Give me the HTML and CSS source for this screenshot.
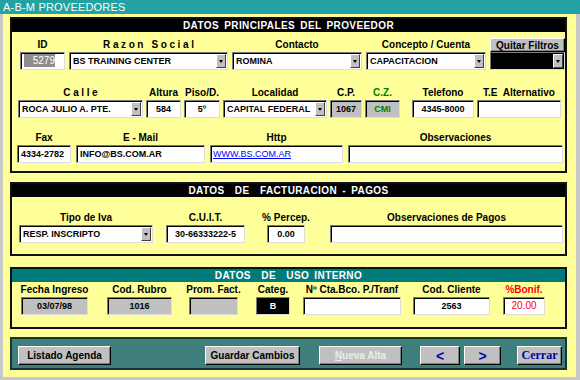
FILE: index.html
```html
<!DOCTYPE html>
<html lang="es">
<head>
  <meta charset="UTF-8" />
  <title>A-B-M Proveedores</title>
  <link rel="stylesheet" href="styles.css">
</head>
<body>
  <div class="window">
    <div class="titlebar">A-B-M PROVEEDORES</div>

    <div class="client">

      <!-- Datos principales -->
      <div class="group g-main">
        <div class="group-head">DATOS PRINCIPALES DEL PROVEEDOR</div>

        <div class="row r1">
          <div class="field w-id">
            <label>ID</label>
            <div class="box"><span class="sel">5279</span></div>
          </div>
          <div class="field w-razon">
            <label class="spaced">Razon Social</label>
            <div class="box select"><span class="val">BS TRAINING CENTER</span><span class="drop"></span></div>
          </div>
          <div class="field w-contacto">
            <label>Contacto</label>
            <div class="box select"><span class="val">ROMINA</span><span class="drop"></span></div>
          </div>
          <div class="field w-concepto">
            <label>Concepto / Cuenta</label>
            <div class="box select"><span class="val">CAPACITACION</span><span class="drop"></span></div>
          </div>
          <div class="field w-filtros">
            <button class="btn btn-filter">Quitar Filtros</button>
            <div class="box select dark"><span class="val"></span><span class="drop"></span></div>
          </div>
        </div>

        <div class="row r2">
          <div class="field w-calle">
            <label class="spaced">Calle</label>
            <div class="box select"><span class="val">ROCA JULIO A. PTE.</span><span class="drop"></span></div>
          </div>
          <div class="field w-altura">
            <label>Altura</label>
            <div class="box center">584</div>
          </div>
          <div class="field w-piso">
            <label>Piso/D.</label>
            <div class="box center">5º</div>
          </div>
          <div class="field w-localidad">
            <label>Localidad</label>
            <div class="box select"><span class="val">CAPITAL FEDERAL</span><span class="drop"></span></div>
          </div>
          <div class="field w-cp">
            <label>C.P.</label>
            <div class="box grey center">1067</div>
          </div>
          <div class="field w-cz">
            <label class="green">C.Z.</label>
            <div class="box grey center green">CMI</div>
          </div>
          <div class="field w-tel">
            <label>Telefono</label>
            <div class="box center">4345-8000</div>
          </div>
          <div class="field w-tealt">
            <label>T.E&nbsp; Alternativo</label>
            <div class="box"></div>
          </div>
        </div>

        <div class="row r3">
          <div class="field w-fax">
            <label>Fax</label>
            <div class="box">4334-2782</div>
          </div>
          <div class="field w-email">
            <label>E - Mail</label>
            <div class="box">INFO@BS.COM.AR</div>
          </div>
          <div class="field w-http">
            <label>Http</label>
            <div class="box link">WWW.BS.COM.AR</div>
          </div>
          <div class="field w-obs">
            <label>Observaciones</label>
            <div class="box"></div>
          </div>
        </div>
      </div>

      <!-- Facturacion -->
      <div class="group g-billing">
        <div class="group-head">DATOS&nbsp; DE&nbsp; FACTURACION - PAGOS</div>
        <div class="row r4">
          <div class="field w-iva">
            <label>Tipo de Iva</label>
            <div class="box select"><span class="val">RESP. INSCRIPTO</span><span class="drop"></span></div>
          </div>
          <div class="field w-cuit">
            <label>C.U.I.T.</label>
            <div class="box center">30-66333222-5</div>
          </div>
          <div class="field w-percep">
            <label>% Percep.</label>
            <div class="box center">0.00</div>
          </div>
          <div class="field w-obspagos">
            <label>Observaciones de Pagos</label>
            <div class="box"></div>
          </div>
        </div>
      </div>

      <!-- Uso interno -->
      <div class="group g-internal">
        <div class="group-head teal">DATOS&nbsp; DE&nbsp; USO INTERNO</div>
        <div class="row r5">
          <div class="field w-fecha">
            <label>Fecha Ingreso</label>
            <div class="box grey center">03/07/98</div>
          </div>
          <div class="field w-rubro">
            <label>Cod. Rubro</label>
            <div class="box grey center">1016</div>
          </div>
          <div class="field w-prom">
            <label>Prom. Fact.</label>
            <div class="box grey"></div>
          </div>
          <div class="field w-categ">
            <label>Categ.</label>
            <div class="box dark center">B</div>
          </div>
          <div class="field w-cta">
            <label>Nº Cta.Bco. P./Tranf</label>
            <div class="box"></div>
          </div>
          <div class="field w-codcli">
            <label>Cod. Cliente</label>
            <div class="box center">2563</div>
          </div>
          <div class="field w-bonif">
            <label class="red">%Bonif.</label>
            <div class="box center red thin">20.00</div>
          </div>
        </div>
      </div>

      <!-- Botonera -->
      <div class="toolbar">
        <button class="btn tb-list">Listado Agenda</button>
        <button class="btn tb-save">Guardar Cambios</button>
        <button class="btn tb-new" disabled><u>N</u>ueva Alta</button>
        <button class="btn tb-nav tb-prev">&lt;</button>
        <button class="btn tb-nav tb-next">&gt;</button>
        <button class="btn tb-close">Cerrar</button>
      </div>

    </div>
  </div>
</body>
</html>
```

FILE: styles.css
```css
* {
  box-sizing: border-box;
}

html,
body {
  margin: 0;
}

body {
  font-family: "Liberation Sans", Arial, sans-serif;
  background: #c0c0c0;
}

.window {
  width: 580px;
  height: 380px;
  display: flex;
  flex-direction: column;
  background: #c8c8c8;
}

.titlebar {
  height: 14px;
  background: #22a2a3;
  color: #fff;
  font-size: 11px;
  line-height: 14px;
  padding-left: 3px;
  letter-spacing: 0.2px;
}

.client {
  flex: 1;
  margin: 0 4px 3px 3px;
  background: #ffff99;
  padding: 3px 9px 0 7px;
  display: flex;
  flex-direction: column;
}

/* group frames */
.group {
  border: 2px solid #111;
}

.g-main {
  padding-bottom: 8px;
  margin-bottom: 9px;
}

.g-billing {
  padding-bottom: 11px;
  margin-bottom: 11px;
}

.g-internal {
  padding-bottom: 12px;
  margin-bottom: 8px;
}

.group-head {
  height: 13px;
  background: #000;
  color: #fff;
  font-size: 10px;
  font-weight: bold;
  line-height: 13px;
  text-align: center;
  letter-spacing: 0.4px;
  word-spacing: 2px;
}

.group-head.teal {
  background: #007b7b;
}

/* rows */
.row {
  display: flex;
  align-items: flex-start;
}

.r1 {
  margin-top: 6px;
  padding-left: 8px;
  gap: 4px;
}

.r2 {
  margin-top: 16px;
  padding-left: 6px;
  gap: 3px;
}

.r3 {
  margin-top: 13px;
  padding-left: 5px;
  gap: 5px;
}

.r4 {
  margin-top: 14px;
  padding-left: 7px;
  gap: 13px;
}

.r5 {
  margin-top: 1px;
  padding-left: 9px;
  gap: 13px;
}

.field {
  display: flex;
  flex-direction: column;
  align-items: center;
}

.field label {
  height: 14px;
  line-height: 14px;
  font-size: 10px;
  font-weight: bold;
  white-space: nowrap;
}

.field label.spaced {
  letter-spacing: 2.6px;
  padding-left: 2.6px;
}

.green {
  color: #008000;
}

.red {
  color: #f00;
}

/* field widths */
.w-id { width: 45px; }
.w-razon { width: 159px; }
.w-contacto { width: 130px; }
.w-concepto { width: 120px; }
.w-filtros { width: 75px; }

.w-calle { width: 125px; }
.w-altura { width: 35px; }
.w-piso { width: 36px; }
.w-localidad { width: 104px; }
.w-cp { width: 32px; }
.w-cz { width: 35px; }
.w-tel { width: 62px; margin-left: 9px; }
.w-tealt { width: 84px; }

.w-fax { width: 54px; }
.w-email { width: 129px; }
.w-http { width: 133px; }
.w-obs { width: 215px; }

.w-iva { width: 134px; }
.w-cuit { width: 79px; }
.w-percep { width: 38px; margin-left: 9px; }
.w-obspagos { width: 233px; margin-left: 12px; }

.w-fecha { width: 67px; }
.w-rubro { width: 65px; margin-left: 6px; }
.w-prom { width: 49px; margin-left: 4px; }
.w-categ { width: 34px; margin-left: 5px; }
.w-cta { width: 98px; }
.w-codcli { width: 77px; margin-left: -1px; }
.w-bonif { width: 42px; }

/* sunken edit boxes */
.box {
  width: 100%;
  height: 18px;
  background: #fff;
  border: 1px solid;
  border-color: #7a7a7a #dcdcdc #dcdcdc #7a7a7a;
  box-shadow: inset 1px 1px 0 #000;
  font-size: 9px;
  font-weight: bold;
  line-height: 16px;
  padding: 0 3px;
  white-space: nowrap;
  overflow: hidden;
}

.box.center {
  text-align: center;
}

.box.grey {
  background: #c0c0c0;
}

.box.dark {
  background: #000;
  color: #fff;
}

.box.green {
  color: #008000;
}

.box.red {
  color: #f00;
}

.box.thin {
  font-weight: normal;
  font-size: 10px;
}

.box.link {
  color: #00f;
  font-weight: normal;
  text-decoration: underline;
  padding-left: 2px;
}

.sel {
  display: inline-block;
  width: 31px;
  height: 13px;
  margin-top: 1px;
  background: #8c8c8c;
  color: #fff;
  line-height: 13px;
  text-align: right;
  font-size: 10px;
  font-weight: normal;
  vertical-align: top;
}

.box.select {
  display: flex;
  padding-right: 1px;
}

.select .val {
  flex: 1;
  overflow: hidden;
}

.drop {
  width: 10px;
  height: 14px;
  margin-top: 1px;
  background: #c0c0c0;
  border: 1px solid;
  border-color: #fff #404040 #404040 #fff;
  display: flex;
  align-items: center;
  justify-content: center;
}

.drop::after {
  content: "";
  border-left: 2px solid transparent;
  border-right: 2px solid transparent;
  border-top: 3px solid #000;
}

/* buttons */
.btn {
  height: 19px;
  padding: 0;
  background: #c0c0c0;
  border: 1px solid;
  border-color: #fff #000 #000 #fff;
  box-shadow: inset -1px -1px 0 #808080;
  font-family: "Liberation Sans", Arial, sans-serif;
  font-size: 10px;
  font-weight: bold;
  color: #000;
}

.btn-filter {
  width: 100%;
  height: 14px;
  line-height: 11px;
}

.toolbar {
  display: flex;
  align-items: flex-start;
  background: #3f7f7b;
  border: 2px solid #173432;
  padding: 7px 0 3px 6px;
}

.tb-list { width: 93px; }
.tb-save { width: 95px; margin-left: 94px; }
.tb-new { width: 83px; margin-left: 19px; color: #ececec; }
.tb-nav {
  color: #0000a8;
  font-size: 14px;
  line-height: 14px;
}
.tb-prev { width: 40px; margin-left: 18px; }
.tb-next { width: 37px; margin-left: 4px; }
.tb-close {
  width: 45px;
  margin-left: 16px;
  font-family: "Liberation Serif", "Times New Roman", serif;
  font-size: 12px;
  color: #0000a8;
}
```
